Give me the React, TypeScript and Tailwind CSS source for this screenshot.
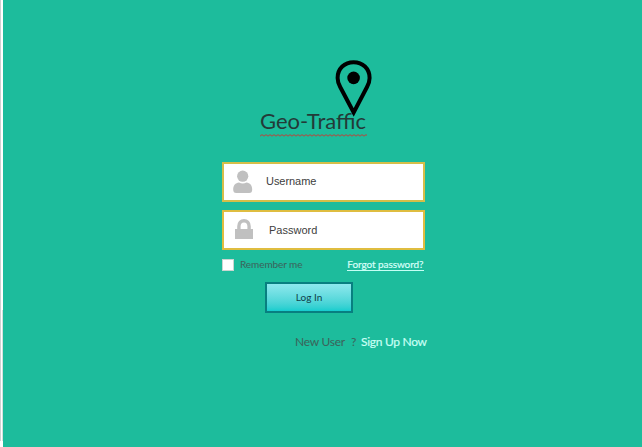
import React from "react";

function PinIcon() {
  return (
    <svg className="absolute left-[75px] top-[-48px]" width="38" height="60" viewBox="0 0 38 60" fill="none">
      <path d="M18.7 53.5L5.2 28C3.5 24.8 2.6 22 2.6 18.9C2.6 9.6 9.6 3.2 18.6 3.2S34.6 9.6 34.6 18.9C34.6 22 33.7 24.8 32 28Z" stroke="#000" strokeWidth="4" />
      <circle cx="18.6" cy="18.9" r="6.3" fill="#000" />
    </svg>
  );
}

function UserIcon() {
  return (
    <svg width="20" height="24" viewBox="0 0 20 24" fill="#c0c0c0">
      <circle cx="9.7" cy="6.2" r="5.6" />
      <path d="M0.2 19.5C0.2 15.5 2.5 13 6 12.6Q9.7 14.6 13.5 12.6C17 13 19.2 15.5 19.2 19.5Q19.2 23 16.2 23H3.2Q0.2 23 0.2 19.5Z" />
    </svg>
  );
}

function LockIcon() {
  return (
    <svg width="18" height="20" viewBox="0 0 18 20">
      <path d="M0 10H18V20H0Z" fill="#c0c0c0" />
      <path d="M3.9 11V7.2C3.9 3.9 6 1.7 9 1.7S14.1 3.9 14.1 7.2V11" fill="none" stroke="#c0c0c0" strokeWidth="3.4" />
    </svg>
  );
}

export default function App() {
  return (
    <div className="flex h-[447px] w-[642px] overflow-hidden bg-white font-['Lato',sans-serif]">
      <div className="h-[441px] w-px shrink-0 bg-[#cfcfcf]" />
      <div className="flex w-[2px] shrink-0 flex-col justify-end pb-[6px]">
        <div className="ml-px h-[131px] w-px bg-[#d5e0dd]" />
      </div>
      <main className="h-full flex-1 bg-[#1dbc9c] pl-[218.5px] pt-[107px]">
        <div className="relative ml-[38.5px] h-[28px] w-[107px]">
          <h1 className="whitespace-nowrap text-[22px] leading-[27px] text-[#233a38]">Geo-Traffic</h1>
          <PinIcon />
          <svg className="block" width="107" height="3" viewBox="0 0 107 3">
            <defs>
              <pattern id="wave" width="4" height="3" patternUnits="userSpaceOnUse">
                <path d="M-1 2.5L0 2L2 .8L4 2L5 2.5" fill="none" stroke="#8d6656" strokeWidth="1.3" />
              </pattern>
            </defs>
            <rect width="107" height="3" fill="url(#wave)" />
          </svg>
        </div>
        <form className="mt-[26.5px] w-[206px]">
          <label className="flex h-[40px] w-[203.5px] items-center border-2 border-[#d5be49] bg-white pl-[9.5px] font-['Liberation_Sans',Arial,sans-serif] text-[11px] text-[#404040]">
            <UserIcon />
            <span className="ml-[13px] tracking-[-0.05px]">Username</span>
          </label>
          <label className="mt-[8.5px] flex h-[40px] w-[203.5px] items-center border-2 border-[#dfbd40] bg-white pl-[11.5px] font-['Liberation_Sans',Arial,sans-serif] text-[11px] text-[#404040]">
            <span className="-mt-[3px]"><LockIcon /></span>
            <span className="ml-[16px]">Password</span>
          </label>
          <div className="mt-[8px] flex h-[14px] items-center text-[10px] leading-[14px]">
            <span className="-mt-px size-[12px] shrink-0 border border-[#cbd5d1] bg-white" />
            <span className="-mt-[2px] ml-[6.5px] whitespace-nowrap tracking-[-0.08px] text-[#3c625a]">Remember me</span>
            <a className="-mt-px ml-auto mr-[4px] h-[13px] whitespace-nowrap border-b border-[#c5fff5] leading-[12px] tracking-[-0.08px] text-[#d5fff8] [-webkit-text-stroke:0.2px]">Forgot password?</a>
          </div>
          <button type="button" className="ml-[43.5px] mt-[10px] block h-[31px] w-[88px] border-2 border-[#087f80] bg-linear-to-b from-[#8ce8ed] to-[#11cdce] text-[10px] text-[#123f49]">Log In</button>
        </form>
        <p className="ml-[73.5px] mt-[21px] flex whitespace-nowrap text-[12px] leading-[16px] tracking-[-0.25px] text-[#3c625a]">
          <span>New User</span>
          <span className="ml-[6px]">?</span>
          <a className="ml-[5px] tracking-[-0.3px] text-[#c9fff4] [-webkit-text-stroke:0.2px]">Sign Up Now</a>
        </p>
      </main>
    </div>
  );
}
